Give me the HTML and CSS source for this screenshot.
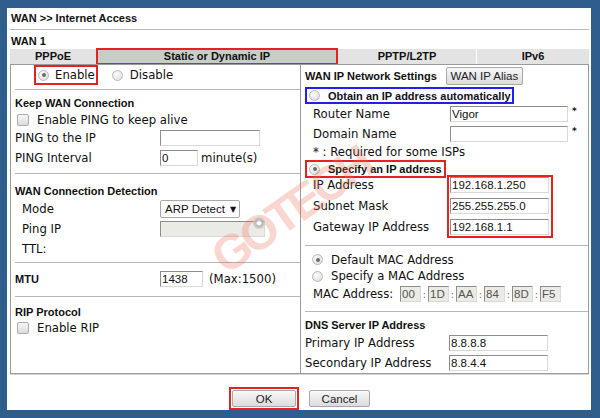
FILE: index.html
```html
<!DOCTYPE html>
<html lang="en">
<head>
    <meta charset="UTF-8">
    <title>WAN &gt;&gt; Internet Access</title>
    <link rel="stylesheet" href="styles.css">
</head>
<body>
<div class="frame">
    <div class="page">
        <div class="title">WAN &gt;&gt; Internet Access</div>
        <div class="wan-label">WAN 1</div>

        <!-- tabs -->
        <div class="tabs">
            <div class="tab tab-pppoe">PPPoE</div>
            <div class="tab tab-static active">Static or Dynamic IP</div>
            <div class="tab tab-pptp">PPTP/L2TP</div>
            <div class="tab tab-ipv6">IPv6</div>
        </div>

        <div class="panel">
            <!-- left column -->
            <div class="col col-left">
                <div class="enable-row">
                    <span class="mark-red opt">
                        <span class="radio on"></span>Enable
                    </span>
                    <span class="opt opt-disable">
                        <span class="radio"></span>Disable
                    </span>
                </div>

                <div class="rule"></div>
                <div class="heading h-keep">Keep WAN Connection</div>
                <div class="row row-check">
                    <span class="check"></span>Enable PING to keep alive
                </div>
                <div class="row">
                    <span class="label">PING to the IP</span>
                    <input class="field w-ping" type="text" value="">
                </div>
                <div class="row">
                    <span class="label">PING Interval</span>
                    <input class="field w-interval" type="text" value="0">
                    <span class="unit">minute(s)</span>
                </div>

                <div class="rule rule-2"></div>
                <div class="heading h-detect">WAN Connection Detection</div>
                <div class="row">
                    <span class="label indent">Mode</span>
                    <div class="select">ARP Detect<span class="arrow">&#9660;</span></div>
                </div>
                <div class="row">
                    <span class="label indent">Ping IP</span>
                    <input class="field disabled w-pingip" type="text" value="" disabled>
                </div>
                <div class="row">
                    <span class="label indent">TTL:</span>
                </div>

                <div class="rule rule-3"></div>
                <div class="row row-mtu">
                    <span class="label heading-inline">MTU</span>
                    <input class="field w-mtu" type="text" value="1438">
                    <span class="unit unit-mtu">(Max:1500)</span>
                </div>

                <div class="rule rule-4"></div>
                <div class="heading h-rip">RIP Protocol</div>
                <div class="row row-check row-rip">
                    <span class="check"></span>Enable RIP
                </div>
            </div>

            <!-- right column -->
            <div class="col col-right">
                <div class="row row-head">
                    <span class="heading-inline">WAN IP Network Settings</span>
                    <button class="btn btn-alias">WAN IP Alias</button>
                </div>
                <div class="mark-blue choice">
                    <span class="radio"></span>Obtain an IP address automatically
                </div>
                <div class="row row-router">
                    <span class="rlabel">Router Name</span>
                    <input class="field w-name" type="text" value="Vigor">
                    <span class="star">*</span>
                </div>
                <div class="row row-domain">
                    <span class="rlabel">Domain Name</span>
                    <input class="field w-name" type="text" value="">
                    <span class="star">*</span>
                </div>
                <div class="row row-note">
                    <span class="rlabel">* : Required for some ISPs</span>
                </div>
                <div class="mark-red choice choice-specify">
                    <span class="radio on"></span>Specify an IP address
                </div>
                <div class="ip-block">
                    <div class="ip-labels">
                        <div>IP Address</div>
                        <div>Subnet Mask</div>
                        <div>Gateway IP Address</div>
                    </div>
                    <div class="mark-red ip-fields">
                        <input class="field w-ip" type="text" value="192.168.1.250">
                        <input class="field w-ip" type="text" value="255.255.255.0">
                        <input class="field w-ip" type="text" value="192.168.1.1">
                    </div>
                </div>

                <div class="rule rule-mac"></div>
                <div class="row row-mac1">
                    <span class="radio on"></span>Default MAC Address
                </div>
                <div class="row row-mac2">
                    <span class="radio"></span>Specify a MAC Address
                </div>
                <div class="row row-mac3">
                    <span class="mac-label">MAC Address:</span>
                    <input class="field disabled mac" type="text" value="00" disabled>
                    <span class="sep">:</span>
                    <input class="field disabled mac" type="text" value="1D" disabled>
                    <span class="sep">:</span>
                    <input class="field disabled mac" type="text" value="AA" disabled>
                    <span class="sep">:</span>
                    <input class="field disabled mac" type="text" value="84" disabled>
                    <span class="sep">:</span>
                    <input class="field disabled mac" type="text" value="8D" disabled>
                    <span class="sep">:</span>
                    <input class="field disabled mac" type="text" value="F5" disabled>
                </div>

                <div class="rule rule-dns"></div>
                <div class="heading h-dns">DNS Server IP Address</div>
                <div class="row">
                    <span class="dlabel">Primary IP Address</span>
                    <input class="field w-ip" type="text" value="8.8.8.8">
                </div>
                <div class="row">
                    <span class="dlabel">Secondary IP Address</span>
                    <input class="field w-ip" type="text" value="8.8.4.4">
                </div>
            </div>

            <!-- watermark over the form -->
            <div class="watermark">GOTECH</div>
            <div class="wm-dot"></div>
        </div>

        <div class="actions">
            <span class="mark-red ok-wrap"><button class="btn btn-ok">OK</button></span>
            <button class="btn btn-cancel">Cancel</button>
        </div>
    </div>
</div>
</body>
</html>
```

FILE: styles.css
```css
body {
    margin: 0;
    font-family: "DejaVu Sans", Verdana, sans-serif;
    font-size: 11.7px;
    color: #111;
    background-color: #fff;
}
.frame {
    height: 418px;
    box-sizing: border-box;
    border: solid #2f5d8c;
    border-width: 8px 9px 8px 7px;
}
.page {
    padding: 0 2px 0 3px;
}
.title, .wan-label, .heading, .heading-inline, .tab {
    font-family: "Liberation Sans", Arial, sans-serif;
    font-weight: bold;
    font-size: 11px;
    color: #111;
}
.title {
    height: 21px;
    line-height: 20px;
    padding-left: 1px;
    border-bottom: 1px solid #b9b9b9;
}
.wan-label {
    height: 19px;
    line-height: 22px;
    padding-left: 1px;
}

/* tabs */
.tabs {
    display: flex;
    gap: 1px;
    height: 15px;
}
.tab {
    background-color: #e3e3e3;
    line-height: 15px;
    text-align: center;
}
.tab-pppoe { width: 86px; }
.tab-static { width: 240px; }
.tab-pptp { width: 138px; }
.tab-ipv6 { width: 112px; }
.tab.active {
    background-color: #cbcbcb;
    outline: 2px solid #e2231f;
    outline-offset: -1px;
}

/* main box */
.panel {
    position: relative;
    display: flex;
    height: 310px;
    box-sizing: border-box;
    border: 1px solid #9b9b9b;
    box-shadow: 0 1px 0 #d6d6d6;
    overflow: hidden;
}
.col-left {
    width: 289px;
    padding-left: 4px;
    box-sizing: border-box;
}
.col-right {
    flex: 1;
    padding-left: 4px;
    border-left: 1px solid #9b9b9b;
}
.row {
    display: flex;
    align-items: center;
    height: 20px;
    white-space: nowrap;
}
.rule {
    border-top: 1px solid #b6b6b6;
}
.heading {
    height: 16px;
    line-height: 16px;
}
.label {
    width: 145px;
}
.label.indent {
    width: 138px;
    padding-left: 7px;
}
.mark-red {
    border: 2px solid #e2231f;
}
.mark-blue {
    border: 2px solid #1f1ff0;
}

/* radios / checkboxes */
.radio {
    position: relative;
    display: inline-block;
    width: 9px;
    height: 9px;
    border-radius: 50%;
    border: 1px solid #b9b9b9;
    background: radial-gradient(circle at 40% 35%, #fbfbfb, #dadada);
    flex-shrink: 0;
}
.radio.on::after {
    content: "";
    position: absolute;
    left: 2.5px;
    top: 2.5px;
    width: 4px;
    height: 4px;
    border-radius: 50%;
    background-color: #6a6a6a;
}
.check {
    display: inline-block;
    width: 10px;
    height: 10px;
    border: 1px solid #adadad;
    border-radius: 2px;
    background: linear-gradient(#f6f6f6, #dcdcdc);
    margin: 0 8px 0 2px;
    flex-shrink: 0;
}

/* enable row */
.enable-row {
    display: flex;
    height: 24px;
    align-items: flex-start;
}
.opt {
    display: flex;
    align-items: center;
    height: 16px;
    padding-right: 1px;
}
.opt .radio {
    margin: 0 6px 0 2px;
}
.enable-row .mark-red {
    margin-left: 19px;
}
.opt-disable {
    margin: 2px 0 0 12px;
}
.opt-disable .radio {
    margin-right: 7px;
}

/* left sections */
.h-keep { margin-top: 5px; }
.row-check { height: 17px; }
.rule-2 { margin-top: 5px; }
.h-detect { margin-top: 9px; }
.rule-3 { margin-top: 3px; }
.row-mtu { margin-top: 6px; }
.rule-4 { margin-top: 7px; }
.h-rip { margin-top: 7px; }
.row-rip { height: 16px; }

/* inputs */
.field {
    height: 16px;
    box-sizing: border-box;
    border: 1px solid;
    border-color: #8d8d8d #d9d9d9 #d9d9d9 #8d8d8d;
    padding: 0 1px;
    margin: 0;
    font-family: "Liberation Sans", Arial, sans-serif;
    font-size: 11.5px;
    color: #111;
    background-color: #fff;
    outline: none;
}
.field.disabled {
    background-color: #ebebe6;
    color: #555;
}
.w-ping { width: 100px; }
.w-interval { width: 38px; }
.w-pingip { width: 105px; }
.w-mtu { width: 43px; }
.w-name { width: 118px; }
.w-ip { width: 99px; }
.unit { margin-left: 3px; }
.unit-mtu { margin-left: 6px; }
.select {
    display: flex;
    align-items: center;
    width: 80px;
    height: 18px;
    box-sizing: border-box;
    border: 1px solid #a8a8a8;
    border-radius: 2px;
    padding-left: 4px;
    font-family: "Liberation Sans", Arial, sans-serif;
    font-size: 11.5px;
    white-space: nowrap;
}
.arrow {
    font-family: "DejaVu Sans", sans-serif;
    font-size: 8px;
    margin-left: 5px;
}

/* right column */
.row-head { height: 21px; }
.btn {
    font-family: "Liberation Sans", Arial, sans-serif;
    font-size: 11.5px;
    color: #222;
    border: 1px solid #a9a9a9;
    border-radius: 2px;
    background: linear-gradient(#f8f8f8, #dcdcdc);
    padding: 0;
    cursor: pointer;
}
.btn-alias {
    width: 77px;
    height: 18px;
    margin-left: 9px;
}
.choice {
    display: inline-flex;
    align-items: center;
    box-sizing: border-box;
    height: 17px;
    padding-right: 1px;
    font-family: "Liberation Sans", Arial, sans-serif;
    font-weight: bold;
    font-size: 11px;
    margin-top: 1px;
}
.choice .radio {
    margin: 0 8px 0 2px;
}
.choice-specify {
    height: 18px;
    margin-top: 0;
    padding-right: 2px;
}
.row-router { height: 20px; }
.row-domain { height: 19px; }
.row-note { height: 17px; }
.rlabel {
    width: 137px;
    padding-left: 8px;
}
.star {
    align-self: flex-start;
    margin: 2px 0 0 4px;
    font-size: 9px;
    font-weight: bold;
}
.ip-block {
    display: flex;
    margin-top: -3px;
}
.ip-labels {
    width: 134px;
    padding-left: 8px;
}
.ip-labels div {
    height: 21px;
    line-height: 21px;
}
.ip-fields {
    display: flex;
    flex-direction: column;
    gap: 5px;
    padding: 0 2px 0 1px;
}
.rule-mac { margin-top: 7px; }
.row-mac1 { height: 17px; margin-top: 5px; }
.row-mac2 { height: 16px; }
.row-mac1 .radio, .row-mac2 .radio {
    margin: 0 8px 0 7px;
}
.mac-label {
    width: 87px;
    padding-left: 8px;
}
.mac {
    width: 21px;
    padding: 0 1px;
}
.sep {
    width: 7px;
    text-align: center;
    font-size: 10px;
    color: #777;
}
.rule-dns { margin-top: 7px; }
.h-dns { margin-top: 5px; }
.dlabel { width: 144px; }

/* watermark */
.watermark {
    position: absolute;
    z-index: 5;
    left: 280px;
    top: 145px;
    transform: translate(-50%, -50%) rotate(-35deg);
    font-family: "Liberation Sans", Arial, sans-serif;
    font-weight: bold;
    font-size: 48px;
    letter-spacing: -4px;
    color: rgba(240, 110, 90, 0.3);
    pointer-events: none;
    white-space: nowrap;
}
.wm-dot {
    position: absolute;
    z-index: 6;
    left: 242px;
    top: 152px;
    width: 12px;
    height: 12px;
    border-radius: 50%;
    background: radial-gradient(circle, #fff 0 2px, #a9a9a9 3px, #cfcfcf 6px);
    opacity: 0.8;
}

/* buttons */
.actions {
    display: flex;
    justify-content: center;
    align-items: center;
    gap: 10px;
    margin-top: 13px;
}
.ok-wrap {
    padding: 1px;
    display: flex;
}
.btn-ok {
    width: 64px;
    height: 17px;
}
.btn-cancel {
    width: 61px;
    height: 17px;
}
```
